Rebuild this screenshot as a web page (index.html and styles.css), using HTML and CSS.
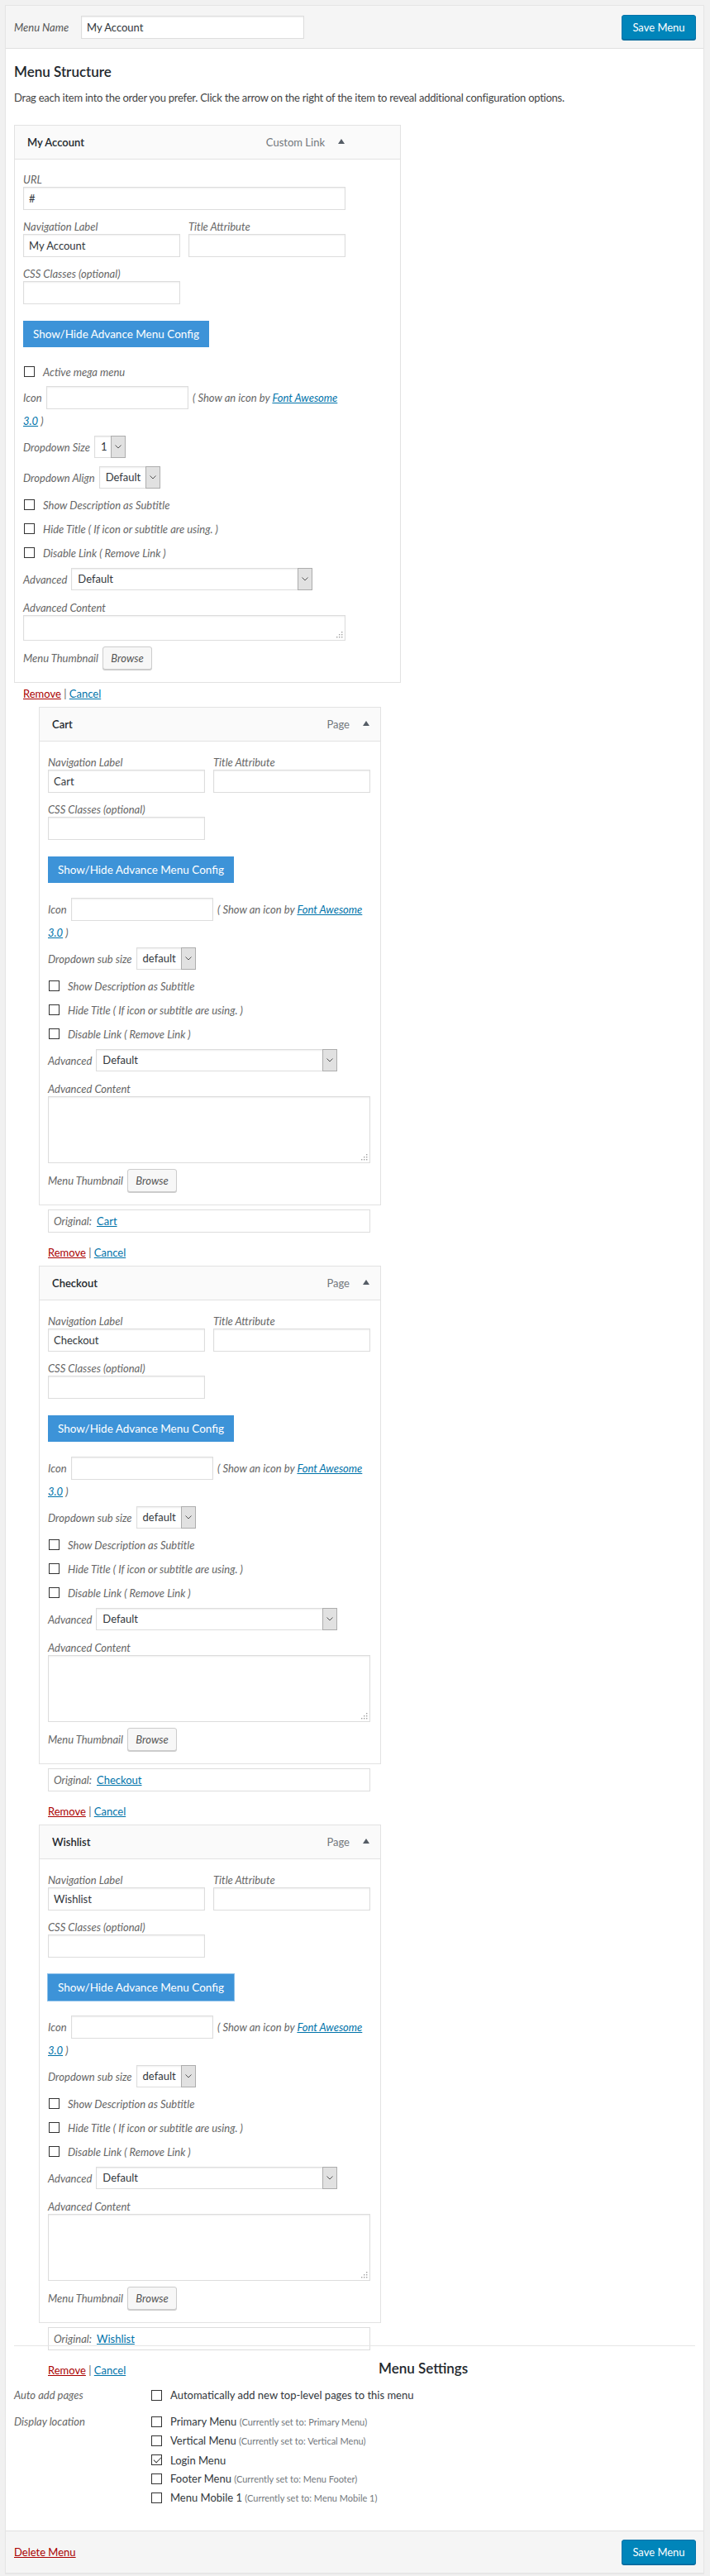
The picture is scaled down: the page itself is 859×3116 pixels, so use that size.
FILE: index.html
```html
<!DOCTYPE html>
<html lang="en">
<head>
<meta charset="utf-8">
<title>Menus</title>
<link rel="stylesheet" href="styles.css">
</head>
<body>
<div class="menu-edit">
  <div class="menu-header">
    <label class="menu-name"><span class="menu-name-label">Menu Name</span><input class="text name-input" type="text" value="My Account"></label>
    <button class="btn-primary" type="button">Save Menu</button>
  </div>
  <div class="menu-body">
    <h3 class="section-title">Menu Structure</h3>
    <p class="intro">Drag each item into the order you prefer. Click the arrow on the right of the item to reveal additional configuration options.</p>
    <ul class="menu-list">
      <li class="menu-item">
        <div class="item-handle wide">
          <span class="item-title">My Account</span>
          <span class="item-controls"><span class="item-type">Custom Link</span><svg class="toggle" width="8" height="6" viewBox="0 0 8 6"><path d="M0 6 L4 0 L8 6 Z" fill="#555d66"/></svg></span>
        </div>
        <div class="item-settings wide">
          <div class="field field-url"><label class="lbl">URL</label><input class="text" type="text" value="#"></div>
          <div class="field-row">
            <div class="field"><label class="lbl">Navigation Label</label><input class="text" type="text" value="My Account"></div>
            <div class="field"><label class="lbl">Title Attribute</label><input class="text" type="text" value=""></div>
          </div>
          <div class="field field-css"><label class="lbl">CSS Classes (optional)</label><input class="text" type="text" value=""></div>
          <button class="btn-adv" type="button">Show/Hide Advance Menu Config</button>
          <label class="check-row mega"><input class="cb" type="checkbox"><span>Active mega menu</span></label>
          <div class="icon-row"><span class="lbl-inline">Icon</span><input class="text" type="text" value="">( Show an icon by <a>Font Awesome<br>3.0</a> )</div>
          <div class="select-row"><span>Dropdown Size</span><span class="select s-size"><span class="val">1</span><span class="arr"><svg width="8" height="5" viewBox="0 0 8 5"><path d="M0.5 0.5 L4 4 L7.5 0.5" fill="none" stroke="#555" stroke-width="1"/></svg></span></span></div>
          <div class="select-row"><span>Dropdown Align</span><span class="select s-align"><span class="val">Default</span><span class="arr"><svg width="8" height="5" viewBox="0 0 8 5"><path d="M0.5 0.5 L4 4 L7.5 0.5" fill="none" stroke="#555" stroke-width="1"/></svg></span></span></div>
          <div class="checks">
            <label class="check-row"><input class="cb" type="checkbox"><span>Show Description as Subtitle</span></label>
            <label class="check-row"><input class="cb" type="checkbox"><span>Hide Title ( If icon or subtitle are using. )</span></label>
            <label class="check-row"><input class="cb" type="checkbox"><span>Disable Link ( Remove Link )</span></label>
          </div>
          <div class="select-row adv"><span>Advanced</span><span class="select s-adv"><span class="val">Default</span><span class="arr"><svg width="8" height="5" viewBox="0 0 8 5"><path d="M0.5 0.5 L4 4 L7.5 0.5" fill="none" stroke="#555" stroke-width="1"/></svg></span></span></div>
          <div class="field field-content"><label class="lbl">Advanced Content</label><div class="area-wrap"><textarea class="area short"></textarea><svg class="grip" width="8" height="8" viewBox="0 0 8 8"><g fill="#a0a0a0"><rect x="6" y="0" width="1.4" height="1.4"/><rect x="3" y="3" width="1.4" height="1.4"/><rect x="6" y="3" width="1.4" height="1.4"/><rect x="0" y="6" width="1.4" height="1.4"/><rect x="3" y="6" width="1.4" height="1.4"/><rect x="6" y="6" width="1.4" height="1.4"/></g></svg></div></div>
          <div class="thumb-row"><span>Menu Thumbnail</span><button class="btn-browse" type="button">Browse</button></div>
        </div>
        <div class="item-actions tight"><a class="remove">Remove</a> <span class="sep">|</span> <a class="cancel">Cancel</a></div>
      </li>

      <li class="menu-item depth-1">
        <div class="item-handle">
          <span class="item-title">Cart</span>
          <span class="item-controls"><span class="item-type">Page</span><svg class="toggle" width="8" height="6" viewBox="0 0 8 6"><path d="M0 6 L4 0 L8 6 Z" fill="#555d66"/></svg></span>
        </div>
        <div class="item-settings">
          <div class="field-row first">
            <div class="field"><label class="lbl">Navigation Label</label><input class="text" type="text" value="Cart"></div>
            <div class="field"><label class="lbl">Title Attribute</label><input class="text" type="text" value=""></div>
          </div>
          <div class="field field-css"><label class="lbl">CSS Classes (optional)</label><input class="text" type="text" value=""></div>
          <button class="btn-adv" type="button">Show/Hide Advance Menu Config</button>
          <div class="icon-row"><span class="lbl-inline">Icon</span><input class="text" type="text" value="">( Show an icon by <a>Font Awesome<br>3.0</a> )</div>
          <div class="select-row"><span>Dropdown sub size</span><span class="select s-sub"><span class="val">default</span><span class="arr"><svg width="8" height="5" viewBox="0 0 8 5"><path d="M0.5 0.5 L4 4 L7.5 0.5" fill="none" stroke="#555" stroke-width="1"/></svg></span></span></div>
          <div class="checks">
            <label class="check-row"><input class="cb" type="checkbox"><span>Show Description as Subtitle</span></label>
            <label class="check-row"><input class="cb" type="checkbox"><span>Hide Title ( If icon or subtitle are using. )</span></label>
            <label class="check-row"><input class="cb" type="checkbox"><span>Disable Link ( Remove Link )</span></label>
          </div>
          <div class="select-row adv"><span>Advanced</span><span class="select s-adv"><span class="val">Default</span><span class="arr"><svg width="8" height="5" viewBox="0 0 8 5"><path d="M0.5 0.5 L4 4 L7.5 0.5" fill="none" stroke="#555" stroke-width="1"/></svg></span></span></div>
          <div class="field field-content"><label class="lbl">Advanced Content</label><div class="area-wrap"><textarea class="area"></textarea><svg class="grip" width="8" height="8" viewBox="0 0 8 8"><g fill="#a0a0a0"><rect x="6" y="0" width="1.4" height="1.4"/><rect x="3" y="3" width="1.4" height="1.4"/><rect x="6" y="3" width="1.4" height="1.4"/><rect x="0" y="6" width="1.4" height="1.4"/><rect x="3" y="6" width="1.4" height="1.4"/><rect x="6" y="6" width="1.4" height="1.4"/></g></svg></div></div>
          <div class="thumb-row"><span>Menu Thumbnail</span><button class="btn-browse" type="button">Browse</button></div>
        </div>
        <div class="original"><span>Original:</span><a>Cart</a></div>
        <div class="item-actions"><a class="remove">Remove</a> <span class="sep">|</span> <a class="cancel">Cancel</a></div>
      </li>

      <li class="menu-item depth-1">
        <div class="item-handle">
          <span class="item-title">Checkout</span>
          <span class="item-controls"><span class="item-type">Page</span><svg class="toggle" width="8" height="6" viewBox="0 0 8 6"><path d="M0 6 L4 0 L8 6 Z" fill="#555d66"/></svg></span>
        </div>
        <div class="item-settings">
          <div class="field-row first">
            <div class="field"><label class="lbl">Navigation Label</label><input class="text" type="text" value="Checkout"></div>
            <div class="field"><label class="lbl">Title Attribute</label><input class="text" type="text" value=""></div>
          </div>
          <div class="field field-css"><label class="lbl">CSS Classes (optional)</label><input class="text" type="text" value=""></div>
          <button class="btn-adv" type="button">Show/Hide Advance Menu Config</button>
          <div class="icon-row"><span class="lbl-inline">Icon</span><input class="text" type="text" value="">( Show an icon by <a>Font Awesome<br>3.0</a> )</div>
          <div class="select-row"><span>Dropdown sub size</span><span class="select s-sub"><span class="val">default</span><span class="arr"><svg width="8" height="5" viewBox="0 0 8 5"><path d="M0.5 0.5 L4 4 L7.5 0.5" fill="none" stroke="#555" stroke-width="1"/></svg></span></span></div>
          <div class="checks">
            <label class="check-row"><input class="cb" type="checkbox"><span>Show Description as Subtitle</span></label>
            <label class="check-row"><input class="cb" type="checkbox"><span>Hide Title ( If icon or subtitle are using. )</span></label>
            <label class="check-row"><input class="cb" type="checkbox"><span>Disable Link ( Remove Link )</span></label>
          </div>
          <div class="select-row adv"><span>Advanced</span><span class="select s-adv"><span class="val">Default</span><span class="arr"><svg width="8" height="5" viewBox="0 0 8 5"><path d="M0.5 0.5 L4 4 L7.5 0.5" fill="none" stroke="#555" stroke-width="1"/></svg></span></span></div>
          <div class="field field-content"><label class="lbl">Advanced Content</label><div class="area-wrap"><textarea class="area"></textarea><svg class="grip" width="8" height="8" viewBox="0 0 8 8"><g fill="#a0a0a0"><rect x="6" y="0" width="1.4" height="1.4"/><rect x="3" y="3" width="1.4" height="1.4"/><rect x="6" y="3" width="1.4" height="1.4"/><rect x="0" y="6" width="1.4" height="1.4"/><rect x="3" y="6" width="1.4" height="1.4"/><rect x="6" y="6" width="1.4" height="1.4"/></g></svg></div></div>
          <div class="thumb-row"><span>Menu Thumbnail</span><button class="btn-browse" type="button">Browse</button></div>
        </div>
        <div class="original"><span>Original:</span><a>Checkout</a></div>
        <div class="item-actions"><a class="remove">Remove</a> <span class="sep">|</span> <a class="cancel">Cancel</a></div>
      </li>

      <li class="menu-item depth-1">
        <div class="item-handle">
          <span class="item-title">Wishlist</span>
          <span class="item-controls"><span class="item-type">Page</span><svg class="toggle" width="8" height="6" viewBox="0 0 8 6"><path d="M0 6 L4 0 L8 6 Z" fill="#555d66"/></svg></span>
        </div>
        <div class="item-settings">
          <div class="field-row first">
            <div class="field"><label class="lbl">Navigation Label</label><input class="text" type="text" value="Wishlist"></div>
            <div class="field"><label class="lbl">Title Attribute</label><input class="text" type="text" value=""></div>
          </div>
          <div class="field field-css"><label class="lbl">CSS Classes (optional)</label><input class="text" type="text" value=""></div>
          <button class="btn-adv focused" type="button">Show/Hide Advance Menu Config</button>
          <div class="icon-row"><span class="lbl-inline">Icon</span><input class="text" type="text" value="">( Show an icon by <a>Font Awesome<br>3.0</a> )</div>
          <div class="select-row"><span>Dropdown sub size</span><span class="select s-sub"><span class="val">default</span><span class="arr"><svg width="8" height="5" viewBox="0 0 8 5"><path d="M0.5 0.5 L4 4 L7.5 0.5" fill="none" stroke="#555" stroke-width="1"/></svg></span></span></div>
          <div class="checks">
            <label class="check-row"><input class="cb" type="checkbox"><span>Show Description as Subtitle</span></label>
            <label class="check-row"><input class="cb" type="checkbox"><span>Hide Title ( If icon or subtitle are using. )</span></label>
            <label class="check-row"><input class="cb" type="checkbox"><span>Disable Link ( Remove Link )</span></label>
          </div>
          <div class="select-row adv"><span>Advanced</span><span class="select s-adv"><span class="val">Default</span><span class="arr"><svg width="8" height="5" viewBox="0 0 8 5"><path d="M0.5 0.5 L4 4 L7.5 0.5" fill="none" stroke="#555" stroke-width="1"/></svg></span></span></div>
          <div class="field field-content"><label class="lbl">Advanced Content</label><div class="area-wrap"><textarea class="area"></textarea><svg class="grip" width="8" height="8" viewBox="0 0 8 8"><g fill="#a0a0a0"><rect x="6" y="0" width="1.4" height="1.4"/><rect x="3" y="3" width="1.4" height="1.4"/><rect x="6" y="3" width="1.4" height="1.4"/><rect x="0" y="6" width="1.4" height="1.4"/><rect x="3" y="6" width="1.4" height="1.4"/><rect x="6" y="6" width="1.4" height="1.4"/></g></svg></div></div>
          <div class="thumb-row"><span>Menu Thumbnail</span><button class="btn-browse" type="button">Browse</button></div>
        </div>
        <div class="original"><span>Original:</span><a>Wishlist</a></div>
        <div class="item-actions"><a class="remove">Remove</a> <span class="sep">|</span> <a class="cancel">Cancel</a></div>
      </li>
    </ul>

    <div class="menu-settings">
      <h3 class="settings-title">Menu Settings</h3>
      <div class="setting auto">
        <span class="setting-label">Auto add pages</span>
        <div class="setting-opts">
          <label class="opt"><input class="cb" type="checkbox"><span>Automatically add new top-level pages to this menu</span></label>
        </div>
      </div>
      <div class="setting locations">
        <span class="setting-label">Display location</span>
        <div class="setting-opts">
          <label class="opt"><input class="cb" type="checkbox"><span>Primary Menu <span class="note">(Currently set to: Primary Menu)</span></span></label>
          <label class="opt"><input class="cb" type="checkbox"><span>Vertical Menu <span class="note">(Currently set to: Vertical Menu)</span></span></label>
          <label class="opt"><input class="cb" type="checkbox" checked><span>Login Menu</span></label>
          <label class="opt"><input class="cb" type="checkbox"><span>Footer Menu <span class="note">(Currently set to: Menu Footer)</span></span></label>
          <label class="opt"><input class="cb" type="checkbox"><span>Menu Mobile 1 <span class="note">(Currently set to: Menu Mobile 1)</span></span></label>
        </div>
      </div>
    </div>
  </div>
  <div class="menu-footer">
    <a class="delete">Delete Menu</a>
    <button class="btn-primary" type="button">Save Menu</button>
  </div>
</div>
</body>
</html>
```

FILE: styles.css
```css
* { box-sizing: border-box; }
html { background: #f1f1f1; }
body {
  margin: 0;
  padding: 6px 7px 3px 6px;
  background: #f1f1f1;
  font-family: Lato, "Segoe UI", "Open Sans", sans-serif;
  font-size: 13px;
  line-height: 18px;
  color: #444;
}
a { color: #0073aa; text-decoration: underline; cursor: pointer; }

.menu-edit {
  background: #fff;
  border: 1px solid #e5e5e5;
  box-shadow: 0 1px 1px rgba(0,0,0,.04);
}
.menu-header {
  height: 52px;
  background: #f5f5f5;
  border-bottom: 1px solid #dfdfdf;
  display: flex;
  align-items: center;
  justify-content: space-between;
  padding: 0 9px 0 10px;
}
.menu-name { display: flex; align-items: center; }
.menu-name-label { width: 81px; font-style: italic; color: #555; }
.text {
  display: block;
  height: 28px;
  margin: 0;
  padding: 0 6px;
  border: 1px solid #ddd;
  box-shadow: inset 0 1px 2px rgba(0,0,0,.07);
  background: #fff;
  color: #32373c;
  font: inherit;
  font-style: normal;
  outline: none;
}
.name-input { width: 270px; }
.btn-primary {
  width: 90px;
  height: 30px;
  padding: 0;
  background: #0085ba;
  border: 1px solid #0073aa;
  border-radius: 3px;
  box-shadow: 0 1px 0 #006799;
  color: #fff;
  font: inherit;
  cursor: pointer;
}

.menu-body { padding: 17px 10px 0 10px; }
.section-title {
  margin: 0;
  font-size: 17px;
  line-height: 22px;
  font-weight: 600;
  color: #23282d;
}
.intro { margin: 11px 0 0; letter-spacing: -0.25px; }
.menu-list { list-style: none; margin: 24px 0 0; padding: 0; }
.menu-item + .menu-item { margin-top: 7px; }
.menu-item.depth-1 { margin-left: 30px; }

.item-handle {
  width: 414px;
  height: 42px;
  border: 1px solid #e2e2e2;
  background: #fafafa;
  display: flex;
  align-items: center;
  justify-content: space-between;
  padding: 0 13px 0 15px;
}
.item-handle.wide { width: 468px; padding-right: 67px; }
.item-title { font-weight: 600; color: #23282d; }
.item-controls { display: flex; align-items: center; gap: 16px; color: #72777c; }
.toggle { display: block; margin-top: -3px; }

.item-settings {
  width: 414px;
  border: 1px solid #e2e2e2;
  border-top: 0;
  padding: 16px 12px 15px 10px;
}
.item-settings.wide { width: 468px; padding-top: 15px; }

.lbl { display: block; font-style: italic; color: #666; line-height: 18px; }
.field .text { width: 100%; }
.field-url { width: 390px; }
.field-row { display: flex; gap: 10px; width: 390px; margin-top: 11px; }
.field-row.first { margin-top: 0; }
.field-row .field { width: 190px; }
.field-css { width: 190px; margin-top: 11px; }

.btn-adv {
  display: block;
  margin-top: 20px;
  width: 225px;
  height: 32px;
  padding: 0;
  border: 0;
  background: #3d93d8;
  color: #fff;
  font: inherit;
  font-size: 13.5px;
  cursor: pointer;
}
.btn-adv.focused { box-shadow: 0 0 0 1px #8cc0ea; }

.check-row {
  display: flex;
  align-items: center;
  gap: 10px;
  height: 29px;
  font-style: italic;
  color: #666;
}
.check-row .cb { margin-left: 1px; }
.mega { margin-top: 15px; }

.cb {
  -webkit-appearance: none;
  appearance: none;
  flex: none;
  width: 13px;
  height: 13px;
  margin: 0;
  border: 1px solid #333;
  border-radius: 0;
  background: #fff;
}
.cb:checked::before {
  content: "";
  display: block;
  width: 4px;
  height: 8px;
  margin: 0 0 0 3.5px;
  border-right: 1.5px solid #444;
  border-bottom: 1.5px solid #444;
  transform: rotate(45deg);
}

.icon-row {
  margin-top: 18px;
  width: 390px;
  line-height: 28px;
  font-style: italic;
  color: #666;
}
.mega + .icon-row { margin-top: 3px; }
.lbl-inline { display: inline-block; width: 28px; }
.icon-row .text {
  display: inline-block;
  vertical-align: top;
  width: 172px;
  margin-right: 5px;
}

.select-row {
  display: flex;
  align-items: center;
  gap: 5px;
  height: 27px;
  margin-top: 10px;
  font-style: italic;
  color: #666;
}
.icon-row + .select-row { margin-top: 4px; }
.select-row.adv { margin-top: 4px; }
.select {
  display: flex;
  height: 27px;
  border: 1px solid #ddd;
  background: #fff;
  font-style: normal;
  color: #32373c;
  box-shadow: inset 0 1px 2px rgba(0,0,0,.07);
}
.select .val { flex: 1; padding-left: 7px; line-height: 25px; white-space: nowrap; overflow: hidden; }
.select .arr {
  flex: none;
  width: 18px;
  margin: -1px -1px -1px 0;
  border: 1px solid #adadad;
  background: #e1e1e1;
  display: flex;
  align-items: center;
  justify-content: center;
}
.s-size { width: 38px; }
.s-align { width: 74px; }
.s-sub { width: 72px; }
.s-adv { width: 292px; }

.checks { margin-top: 5px; }

.field-content { width: 390px; margin-top: 12px; }
.area-wrap { position: relative; }
.area {
  display: block;
  width: 390px;
  height: 81px;
  margin: 0;
  border: 1px solid #ddd;
  box-shadow: inset 0 1px 2px rgba(0,0,0,.07);
  resize: none;
  font: inherit;
  outline: none;
}
.area.short { height: 31px; }
.grip { position: absolute; right: 3px; bottom: 3px; }

.thumb-row {
  display: flex;
  align-items: center;
  gap: 5px;
  margin-top: 7px;
  font-style: italic;
  color: #666;
}
.btn-browse {
  width: 60px;
  height: 28px;
  padding: 0;
  background: #f7f7f7;
  border: 1px solid #ccc;
  border-radius: 3px;
  box-shadow: 0 1px 0 #ccc;
  color: #555;
  font: inherit;
  font-style: italic;
  cursor: pointer;
}

.original {
  display: flex;
  align-items: center;
  gap: 6px;
  width: 390px;
  height: 28px;
  margin: 5px 0 0 11px;
  padding-left: 6px;
  border: 1px solid #ddd;
  font-style: italic;
  color: #666;
}
.original a { font-style: normal; }

.item-actions { margin-top: 15px; padding-left: 11px; }
.item-actions.tight { margin-top: 4px; }
.remove { color: #a00; }
.sep { color: #666; }

.menu-settings {
  margin-top: -39px;
  border-top: 1px solid #e5e5e5;
  padding: 16px 0 28px;
}
.settings-title {
  margin: 0 0 0 441px;
  font-size: 17px;
  line-height: 22px;
  font-weight: 600;
  color: #23282d;
}
.setting { display: grid; grid-template-columns: 166px 1fr; margin-top: 11px; }
.setting-label { font-style: italic; color: #666; line-height: 20px; }
.locations .setting-label { line-height: 23px; }
.opt { display: flex; align-items: center; gap: 10px; height: 20px; color: #32373c; }
.locations .opt { height: 23px; }
.note { font-size: 11px; color: #72777c; }

.menu-footer {
  height: 51px;
  border-top: 1px solid #dfdfdf;
  background: #f5f5f5;
  display: flex;
  align-items: center;
  justify-content: space-between;
  padding: 0 9px 0 10px;
}
.delete { color: #a00; }
```
